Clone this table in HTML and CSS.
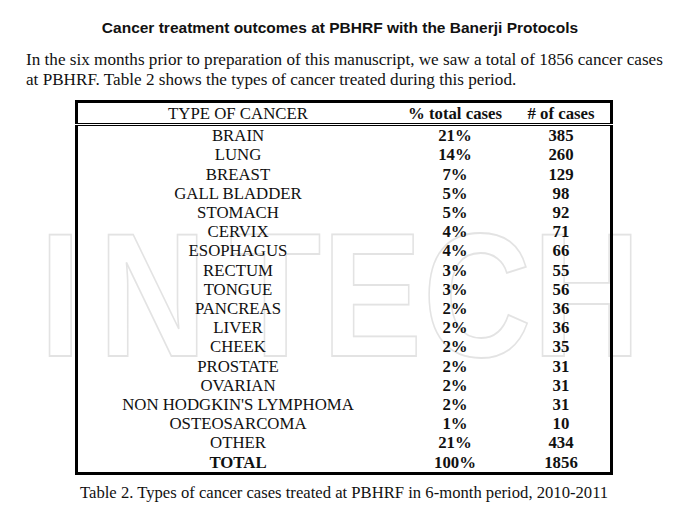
FILE: index.html
```html
<!DOCTYPE html>
<html lang="en">
<head>
<meta charset="utf-8">
<title>Cancer treatment outcomes at PBHRF</title>
<link rel="stylesheet" href="styles.css">
</head>
<body>
<svg class="watermark" width="680" height="518" viewBox="0 0 680 518" aria-hidden="true">
  <g transform="translate(0 356) scale(1 1.18)">
    <text x="39.5 98.5 229.5 322 423 532.5" y="0">INTECH</text>
  </g>
</svg>
<h1 class="title">Cancer treatment outcomes at PBHRF with the Banerji Protocols</h1>
<p class="intro">In the six months prior to preparation of this manuscript, we saw a total of 1856 cancer cases at PBHRF. Table 2 shows the types of cancer treated during this period.</p>
<table class="cases">
  <thead>
    <tr><th class="type">TYPE OF CANCER</th><th class="pct">% total cases</th><th class="num"># of cases</th></tr>
  </thead>
  <tbody>
    <tr><td>BRAIN</td><td>21%</td><td>385</td></tr>
    <tr><td>LUNG</td><td>14%</td><td>260</td></tr>
    <tr><td>BREAST</td><td>7%</td><td>129</td></tr>
    <tr><td>GALL BLADDER</td><td>5%</td><td>98</td></tr>
    <tr><td>STOMACH</td><td>5%</td><td>92</td></tr>
    <tr><td>CERVIX</td><td>4%</td><td>71</td></tr>
    <tr><td>ESOPHAGUS</td><td>4%</td><td>66</td></tr>
    <tr><td>RECTUM</td><td>3%</td><td>55</td></tr>
    <tr><td>TONGUE</td><td>3%</td><td>56</td></tr>
    <tr><td>PANCREAS</td><td>2%</td><td>36</td></tr>
    <tr><td>LIVER</td><td>2%</td><td>36</td></tr>
    <tr><td>CHEEK</td><td>2%</td><td>35</td></tr>
    <tr><td>PROSTATE</td><td>2%</td><td>31</td></tr>
    <tr><td>OVARIAN</td><td>2%</td><td>31</td></tr>
    <tr><td>NON HODGKIN'S LYMPHOMA</td><td>2%</td><td>31</td></tr>
    <tr><td>OSTEOSARCOMA</td><td>1%</td><td>10</td></tr>
    <tr><td>OTHER</td><td>21%</td><td>434</td></tr>
    <tr class="total"><td>TOTAL</td><td>100%</td><td>1856</td></tr>
  </tbody>
</table>
<p class="caption">Table 2. Types of cancer cases treated at PBHRF in 6-month period, 2010-2011</p>
</body>
</html>
```
FILE: styles.css
```css
html, body {
  margin: 0;
  padding: 0;
}
html {
  background: #fff;
}
body {
  position: relative;
  width: 680px;
  height: 518px;
  overflow: hidden;
  color: #111;
  font-family: "Liberation Serif", "Times New Roman", serif;
}
.watermark {
  position: absolute;
  left: 0;
  top: 0;
  z-index: -1;
}
.watermark text {
  font-family: "Liberation Sans", Arial, sans-serif;
  font-weight: bold;
  font-size: 150px;
  fill: none;
  stroke: #e3e3e3;
  stroke-width: 1.5;
}
.title {
  margin: 19px 0 0;
  font-family: "Liberation Sans", Arial, sans-serif;
  font-weight: bold;
  font-size: 15.5px;
  line-height: 18px;
  text-align: center;
}
.intro {
  margin: 13px 0 0 26px;
  width: 650px;
  font-size: 17.15px;
  line-height: 19.5px;
}
.cases {
  margin: 11px 0 0 75px;
  width: 538px;
  border: 3px solid #000;
  border-collapse: collapse;
  font-size: 16.8px;
  line-height: 19.2px;
  text-align: center;
}
.cases th {
  padding: 1px 0 0;
  height: 19px;
  border-bottom: 3px double #000;
}
.cases th.type {
  width: 320px;
  font-weight: normal;
}
.cases th.pct {
  width: 114px;
}
.cases td {
  padding: 0;
}
.cases td + td {
  font-weight: bold;
}
.cases .total td {
  font-weight: bold;
}
.caption {
  margin: 8px 0 0 80px;
  font-size: 16.65px;
  line-height: 20px;
}
```
